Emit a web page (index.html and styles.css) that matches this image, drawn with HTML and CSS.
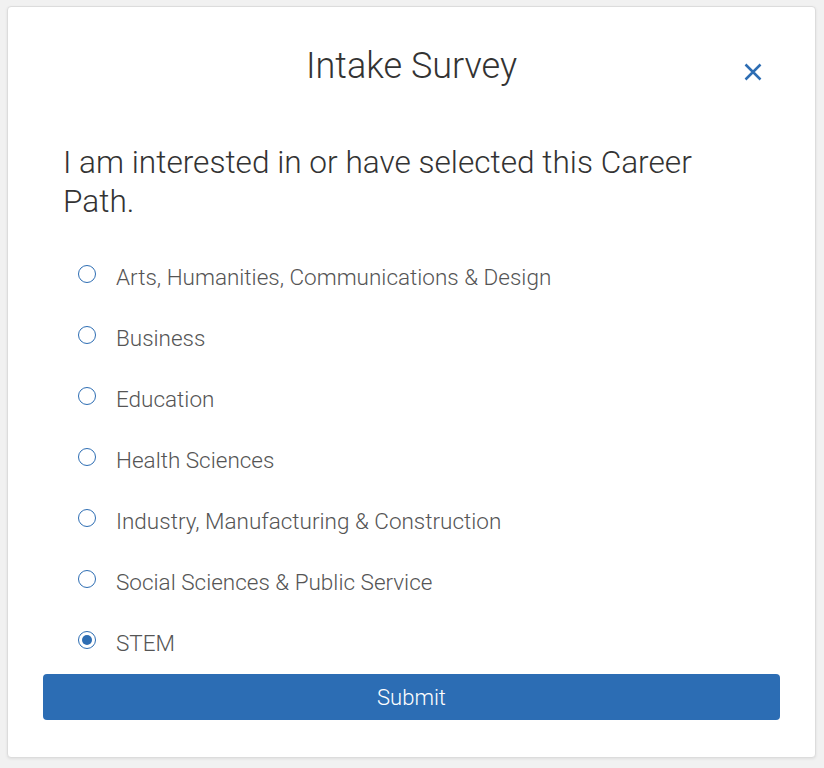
FILE: index.html
```html
<!DOCTYPE html>
<html lang="en">
<head>
<meta charset="utf-8">
<title>Intake Survey</title>
<link rel="stylesheet" href="styles.css">
</head>
<body>
<div class="modal">
  <div class="modal-header">
    <h1 class="modal-title">Intake Survey</h1>
    <button class="close-btn" aria-label="Close">
      <svg width="18" height="18" viewBox="0 0 18 18"><path d="M1.5 1.5 L16.5 16.5 M16.5 1.5 L1.5 16.5" stroke="#2d6db3" stroke-width="2.5" stroke-linecap="butt" fill="none"/></svg>
    </button>
  </div>
  <p class="question">I am interested in or have selected this Career Path.</p>
  <ul class="options">
    <li class="option"><span class="radio"></span><span class="label">Arts, Humanities, Communications &amp; Design</span></li>
    <li class="option"><span class="radio"></span><span class="label">Business</span></li>
    <li class="option"><span class="radio"></span><span class="label">Education</span></li>
    <li class="option"><span class="radio"></span><span class="label">Health Sciences</span></li>
    <li class="option"><span class="radio"></span><span class="label">Industry, Manufacturing &amp; Construction</span></li>
    <li class="option"><span class="radio"></span><span class="label">Social Sciences &amp; Public Service</span></li>
    <li class="option"><span class="radio checked"></span><span class="label">STEM</span></li>
  </ul>
  <button class="submit">Submit</button>
</div>
</body>
</html>
```
FILE: styles.css
```css
html, body {
  margin: 0;
  padding: 0;
  background: #f1f1f1;
}
body {
  font-family: Roboto, "Liberation Sans", sans-serif;
  font-weight: 300;
  padding: 6px 0 10px 7px;
}
.modal {
  position: relative;
  box-sizing: border-box;
  width: 809px;
  height: 752px;
  background: #fff;
  border: 1px solid #dcdcdc;
  border-radius: 4px;
  box-shadow: 0 1px 3px rgba(0,0,0,0.08);
  padding: 38px 35px 37px 35px;
  display: flex;
  flex-direction: column;
}
.modal-header {
  display: flex;
  justify-content: center;
}
.modal-title {
  margin: 0;
  font-size: 36px;
  line-height: 43px;
  font-weight: 300;
  color: #333;
}
.close-btn {
  position: absolute;
  top: 56px;
  right: 53px;
  width: 18px;
  height: 18px;
  padding: 0;
  border: 0;
  background: transparent;
  display: flex;
}
.question {
  margin: 55px 80px 0 20px;
  font-size: 31.6px;
  line-height: 39px;
  color: #333;
  font-weight: 300;
}
.options {
  list-style: none;
  margin: 26px 0 0 0;
  padding: 0 0 0 35px;
}
.option {
  display: flex;
  align-items: flex-start;
  height: 61px;
  gap: 20px;
}
.radio {
  box-sizing: border-box;
  width: 18px;
  height: 18px;
  margin-top: 17.5px;
  border: 1.3px solid #2d6db3;
  border-radius: 50%;
  background: #fff;
  flex: none;
  display: flex;
  align-items: center;
  justify-content: center;
}
.radio.checked::after {
  content: "";
  width: 10px;
  height: 10px;
  border-radius: 50%;
  background: #2d6db3;
}
.label {
  font-size: 22.5px;
  line-height: 61px;
  color: #555;
}
.submit {
  margin-top: 0;
  height: 47px;
  width: 100%;
  border: 0;
  border-radius: 4px;
  background: #2c6db4;
  color: #fff;
  font-family: Roboto, "Liberation Sans", sans-serif;
  font-weight: 300;
  font-size: 22px;
}
```
